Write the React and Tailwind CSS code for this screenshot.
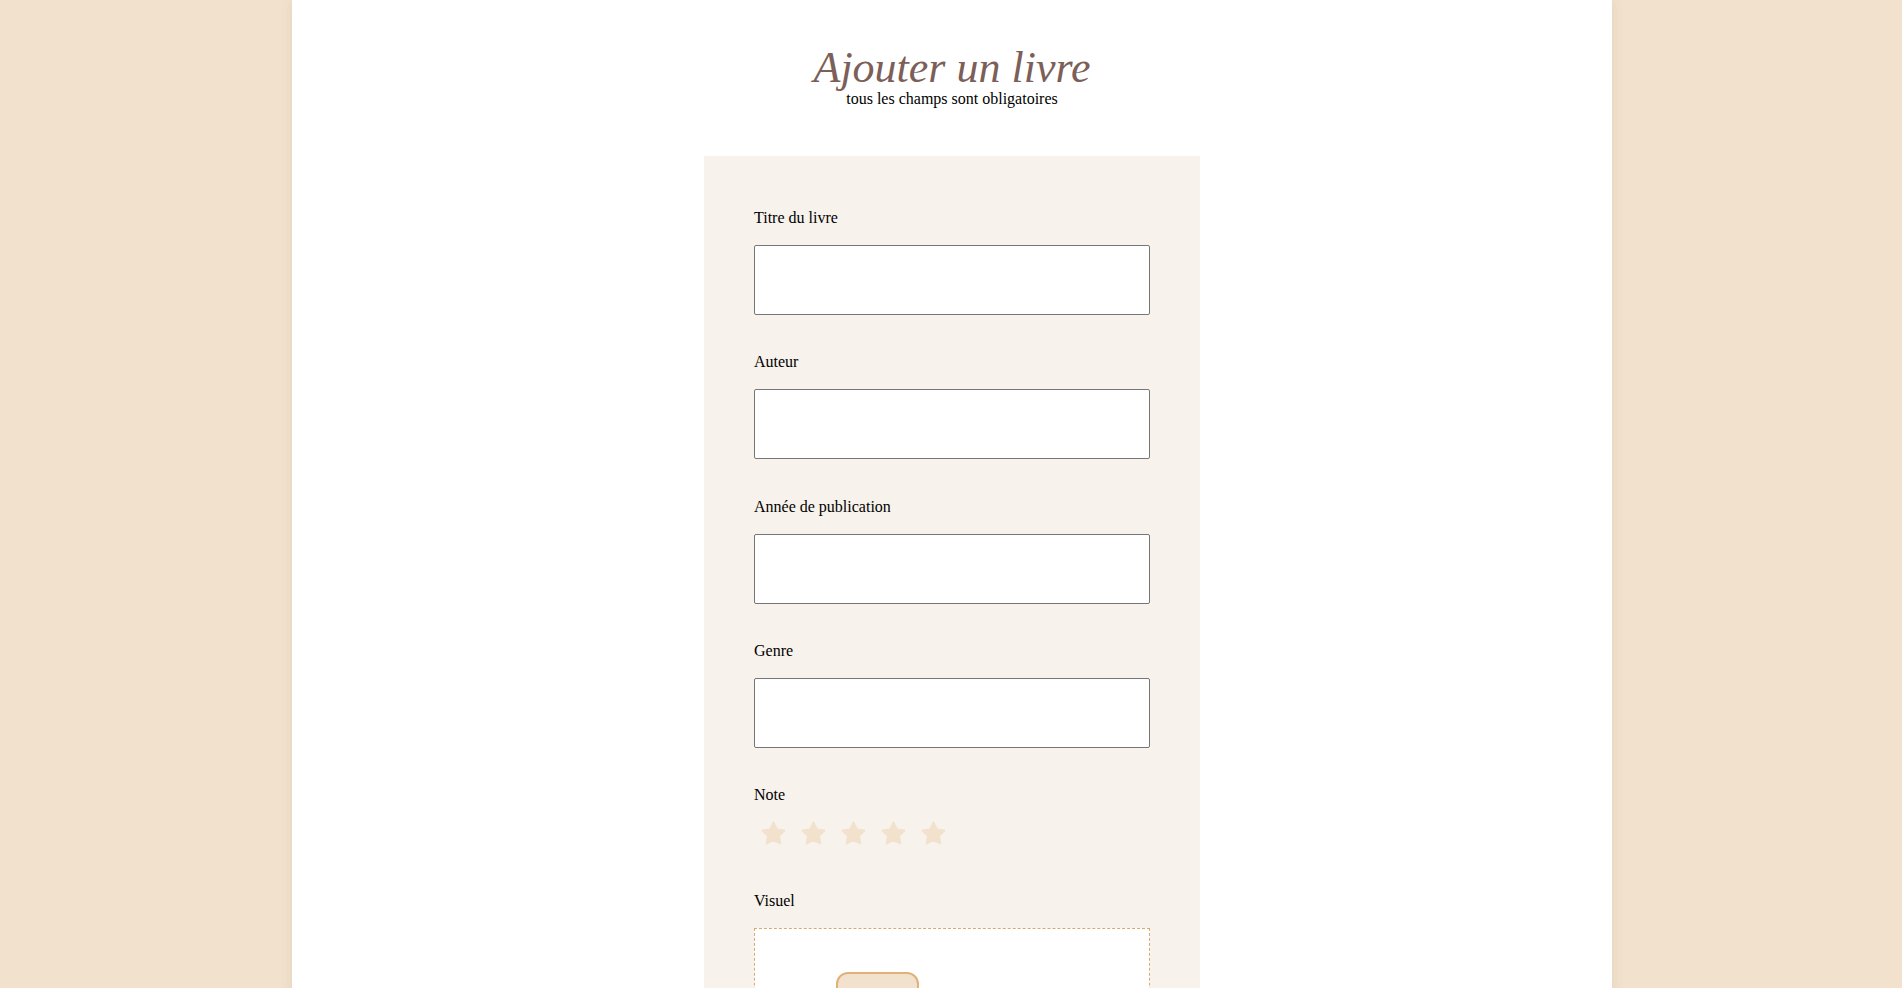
import React from "react";

function Star() {
  return (
    <svg width="27" height="27" viewBox="0 0 24 24" fill="#f2e2cd" stroke="#f2e2cd" strokeWidth="2" strokeLinejoin="round" strokeLinecap="round">
      <path d="M12 2.5l2.94 5.96 6.56.95-4.75 4.63 1.12 6.54L12 17.5l-5.87 3.08 1.12-6.54L2.5 9.41l6.56-.95L12 2.5z" />
    </svg>
  );
}

function Label({ children }) {
  return <label className="block pt-[1px] text-[16px] leading-[18px] text-black">{children}</label>;
}

function Field({ label, first }) {
  return (
    <div className={first ? "" : "mt-[37.4px]"}>
      <Label>{label}</Label>
      <input type="text" className="mt-[18px] block w-full h-[70px] bg-white border border-[#767676] rounded-[2px] outline-none" />
    </div>
  );
}

export default function App() {
  return (
    <div className="min-h-screen bg-[#f2e2cd] pl-[2px] font-['Liberation_Serif','Times_New_Roman',serif]">
      <div className="w-[1320px] mx-auto bg-white min-h-screen shadow-[0_0_12px_rgba(120,90,50,0.12)] pb-[80px]">
        <header className="pt-[46px] text-center">
          <h1 className="text-[44px] leading-[44px] italic text-[#7c5f58] font-normal">Ajouter un livre</h1>
          <p className="text-[16px] leading-[18px] text-black">tous les champs sont obligatoires</p>
        </header>
        <form className="mt-[48px] w-[496px] mx-auto bg-[#f7f2ec] px-[50px] pt-[52px] pb-[60px]">
          <Field label="Titre du livre" first />
          <Field label="Auteur" />
          <Field label="Année de publication" />
          <Field label="Genre" />
          <div className="mt-[36.5px]">
            <Label>Note</Label>
            <div className="mt-[16px] flex gap-[13px] pl-[6px]">
              <Star />
              <Star />
              <Star />
              <Star />
              <Star />
            </div>
          </div>
          <div className="mt-[44px]">
            <Label>Visuel</Label>
            <div className="mt-[18px] bg-white border border-dashed border-[#d9aa70] pt-[43px] pl-[81px] pb-[40px]">
              <button type="button" className="w-[83px] h-[82px] rounded-[12px] bg-[#f2e2cd] border-2 border-[#e0b179]"></button>
            </div>
          </div>
        </form>
      </div>
    </div>
  );
}
